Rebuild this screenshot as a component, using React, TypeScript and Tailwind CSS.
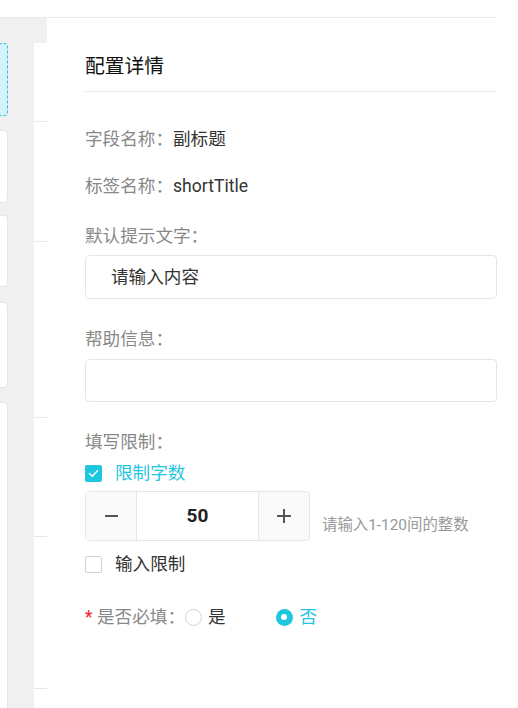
import React from "react";

function Check() {
  return (
    <svg width="11" height="9" viewBox="0 0 11 9" fill="none">
      <path d="M1.5 4.5 L4.3 7.2 L9.5 1.8" stroke="#fff" strokeWidth="1.4" strokeLinecap="round" strokeLinejoin="round" />
    </svg>
  );
}

export default function App() {
  return (
    <div
      className="w-[518px] h-[708px] flex flex-col overflow-hidden bg-white"
      style={{ fontFamily: 'Roboto, "Noto Sans CJK SC", sans-serif' }}
    >
      <div className="h-[18px] shrink-0">
        <div className="w-[497px] h-[18px] border-b border-[#e8e8e8]" />
      </div>
      <div className="flex flex-1 min-h-0">
        {/* left strip */}
        <div className="w-[34px] shrink-0 bg-[#f0f0f0] pt-[25px] flex flex-col overflow-hidden">
          <div className="ml-[-100px] w-[108px] h-[73px] shrink-0 rounded-[4px] border border-dashed border-[#1fc6e0] bg-[#d3f3f8]" />
          <div className="ml-[-100px] w-[108px] h-[73px] mt-[14px] shrink-0 rounded-[4px] border border-[#e6e6e6] bg-white" />
          <div className="ml-[-100px] w-[108px] h-[72px] mt-[12px] shrink-0 rounded-[4px] border border-[#e6e6e6] bg-white" />
          <div className="ml-[-100px] w-[108px] h-[86px] mt-[15px] shrink-0 rounded-[4px] border border-[#e6e6e6] bg-white" />
          <div className="ml-[-100px] w-[108px] h-[400px] mt-[14px] shrink-0 rounded-[4px] border border-[#e6e6e6] bg-white" />
        </div>
        {/* middle strip */}
        <div className="w-[13px] shrink-0 flex flex-col">
          <div className="h-[25px] bg-[#f0f0f0] shrink-0" />
          <div className="h-[79px] border-b border-[#e8e8e8] shrink-0" />
          <div className="h-[120px] border-b border-[#e8e8e8] shrink-0" />
          <div className="h-[176px] border-b border-[#e8e8e8] shrink-0" />
          <div className="h-[119px] border-b border-[#e8e8e8] shrink-0" />
          <div className="h-[152px] border-b border-[#e8e8e8] shrink-0" />
        </div>
        {/* right panel */}
        <div className="flex-1 pl-[38px] pr-[21px]">
          <div className="pt-[37px] pb-[12px] border-b border-[#e8e8e8] text-[19.8px] leading-[24px] text-[#111]">
            配置详情
          </div>
          <div className="mt-[36px] text-[17.6px] leading-[22px] flex">
            <span className="text-[#888]">字段名称：</span>
            <span className="text-[#333]">副标题</span>
          </div>
          <div className="mt-[25px] text-[17.6px] leading-[22px] flex">
            <span className="text-[#888]">标签名称：</span>
            <span className="text-[#333]">shortTitle</span>
          </div>
          <div className="mt-[28px] text-[17.6px] leading-[22px] text-[#888]">默认提示文字：</div>
          <div className="mt-[8px] h-[44px] rounded-[4px] border border-[#e6e6e6] flex items-center pl-[25px] text-[17.6px] text-[#333]">
            请输入内容
          </div>
          <div className="mt-[29px] text-[17.6px] leading-[22px] text-[#888]">帮助信息：</div>
          <div className="mt-[9px] h-[43px] rounded-[4px] border border-[#e6e6e6]" />
          <div className="mt-[29px] text-[17.6px] leading-[22px] text-[#888]">填写限制：</div>
          <div className="mt-[9px] h-[22px] flex items-center">
            <div className="w-[17px] h-[17px] rounded-[2px] bg-[#1fc6e0] flex items-center justify-center">
              <Check />
            </div>
            <span className="ml-[13px] text-[17.6px] leading-[22px] text-[#1fc6e0]">限制字数</span>
          </div>
          <div className="mt-[7px] flex items-center">
            <div className="w-[225px] h-[50px] rounded-[4px] border border-[#e6e6e6] flex overflow-hidden">
              <div className="w-[51px] bg-[#fafafa] border-r border-[#e6e6e6] flex items-center justify-center">
                <div className="w-[13px] h-[1.5px] bg-[#555]" />
              </div>
              <div className="flex-1 flex items-center justify-center text-[19px] font-bold text-[#222]">50</div>
              <div className="w-[51px] bg-[#fafafa] border-l border-[#e6e6e6] flex items-center justify-center relative">
                <div className="w-[14px] h-[1.5px] bg-[#555]" />
                <div className="absolute w-[1.5px] h-[14px] bg-[#555]" />
              </div>
            </div>
            <span className="ml-[12px] mt-[18px] text-[15.4px] leading-[20px] text-[#999]">请输入1-120间的整数</span>
          </div>
          <div className="mt-[12px] h-[22px] flex items-center">
            <div className="w-[17px] h-[17px] rounded-[2px] border border-[#d0d0d0] bg-white" />
            <span className="ml-[13px] text-[17.6px] leading-[22px] text-[#333]">输入限制</span>
          </div>
          <div className="mt-[31px] h-[22px] flex items-center text-[17.6px] leading-[22px]">
            <span className="text-[#f5222d] w-[12px]">*</span>
            <span className="text-[#888]">是否必填：</span>
            <div className="w-[17px] h-[17px] rounded-full border border-[#d0d0d0] bg-white shrink-0" />
            <span className="ml-[6px] text-[#333]">是</span>
            <div className="ml-[50px] w-[17px] h-[17px] rounded-full bg-[#1fc6e0] flex items-center justify-center shrink-0">
              <div className="w-[6px] h-[6px] rounded-full bg-white" />
            </div>
            <span className="ml-[7px] text-[#1fc6e0]">否</span>
          </div>
        </div>
      </div>
    </div>
  );
}
